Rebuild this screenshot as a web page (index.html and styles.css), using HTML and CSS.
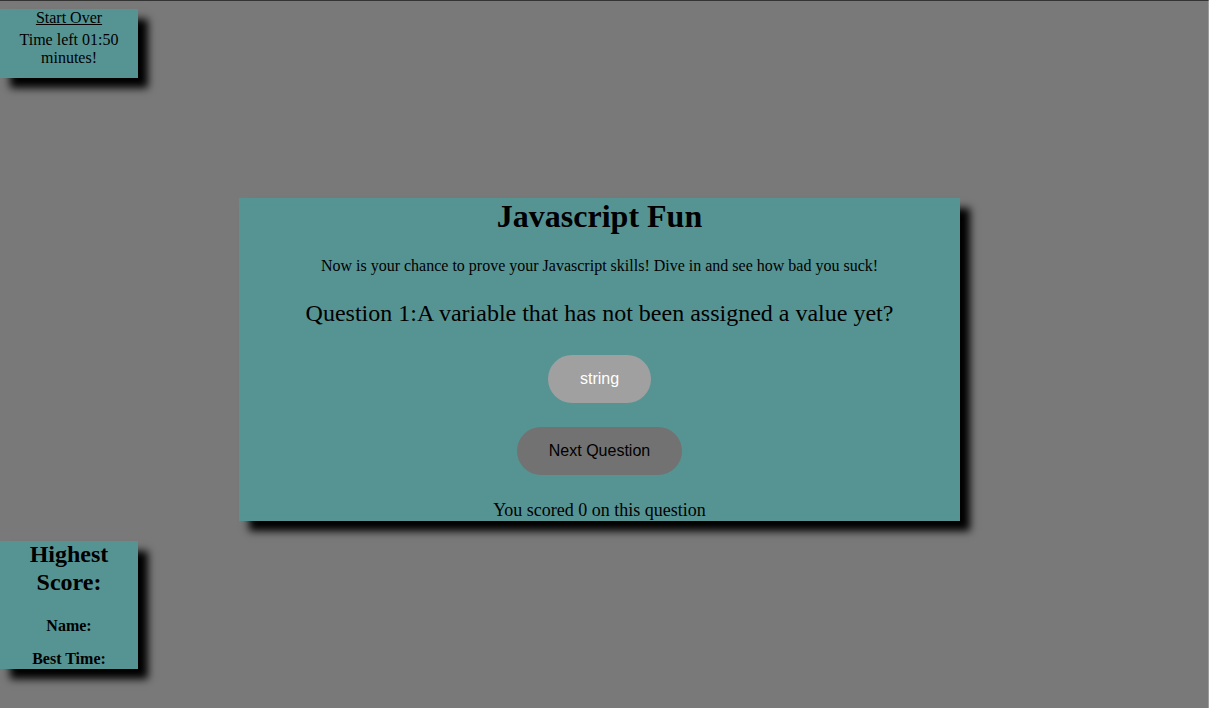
FILE: index.html
```html
<!DOCTYPE html>
<html lang="en">
<head>
<meta charset="utf-8">
<title>Javascript Fun</title>
<link rel="stylesheet" href="styles.css">
</head>
<body>
  <div class="page">
    <div class="timer">
      <a class="start-over" href="#">Start Over</a>
      <p class="time-left">Time left 01:50 minutes!</p>
    </div>

    <main class="quiz">
      <h1 class="quiz-title">Javascript Fun</h1>
      <p class="quiz-intro">Now is your chance to prove your Javascript skills! Dive in and see how bad you suck!</p>
      <h3 class="question">Question 1:A variable that has not been assigned a value yet?</h3>
      <button class="btn btn-answer" type="button">string</button>
      <button class="btn btn-next" type="button">Next Question</button>
      <p class="score">You scored 0 on this question</p>
    </main>

    <aside class="highscore">
      <h2 class="highscore-title">Highest Score:</h2>
      <h4 class="highscore-name">Name:</h4>
      <h4 class="highscore-time">Best Time:</h4>
    </aside>
  </div>
</body>
</html>
```

FILE: styles.css
```css
html, body {
  margin: 0;
  padding: 0;
}

body {
  background: #797979;
  font-family: "Liberation Serif", "Times New Roman", serif;
  color: #000;
  height: 708px;
  box-sizing: border-box;
  border-top: 1px solid #333;
  border-right: 1px solid #9c9c9c;
  overflow: hidden;
}

.page {
  display: flex;
  flex-direction: column;
  align-items: flex-start;
}

.timer,
.quiz,
.highscore {
  background: #569494;
  box-shadow: 10px 10px 8px #000;
  text-align: center;
}

/* top-left timer */
.timer {
  width: 138px;
  margin-top: 8px;
  padding-bottom: 11px;
  font-size: 16px;
  line-height: 18px;
}

.start-over {
  display: block;
  color: #000;
  text-decoration: underline;
}

.time-left {
  margin: 4px 0 0;
}

/* main quiz card */
.quiz {
  width: 721px;
  margin: 120px 0 0 239px;
  display: flex;
  flex-direction: column;
  align-items: center;
}

.quiz-title {
  margin: 0;
  font-size: 32px;
  line-height: 37px;
  font-weight: bold;
}

.quiz-intro {
  margin: 22px 0 0;
  font-size: 16px;
  line-height: 18px;
}

.question {
  margin: 24px 0 0;
  font-size: 24px;
  line-height: 28px;
  font-weight: normal;
}

.btn {
  font-family: "Liberation Sans", Arial, sans-serif;
  font-size: 16px;
  line-height: 18px;
  padding: 15px 32px;
  border: none;
  border-radius: 24px;
  cursor: pointer;
}

.btn-answer {
  margin-top: 28px;
  background: #a0a0a0;
  color: #fff;
}

.btn-next {
  margin-top: 24px;
  background: #727272;
  color: #000;
}

.score {
  margin: 25px 0 0;
  font-size: 18px;
  line-height: 21px;
}

/* bottom-left high score */
.highscore {
  width: 138px;
  height: 128px;
  margin-top: 20px;
}

.highscore-title {
  margin: 0;
  font-size: 24px;
  line-height: 27.5px;
  font-weight: bold;
}

.highscore-name,
.highscore-time {
  font-size: 16px;
  line-height: 18px;
  font-weight: bold;
}

.highscore-name {
  margin: 21px 0 0;
}

.highscore-time {
  margin: 15px 0 0;
}
```
